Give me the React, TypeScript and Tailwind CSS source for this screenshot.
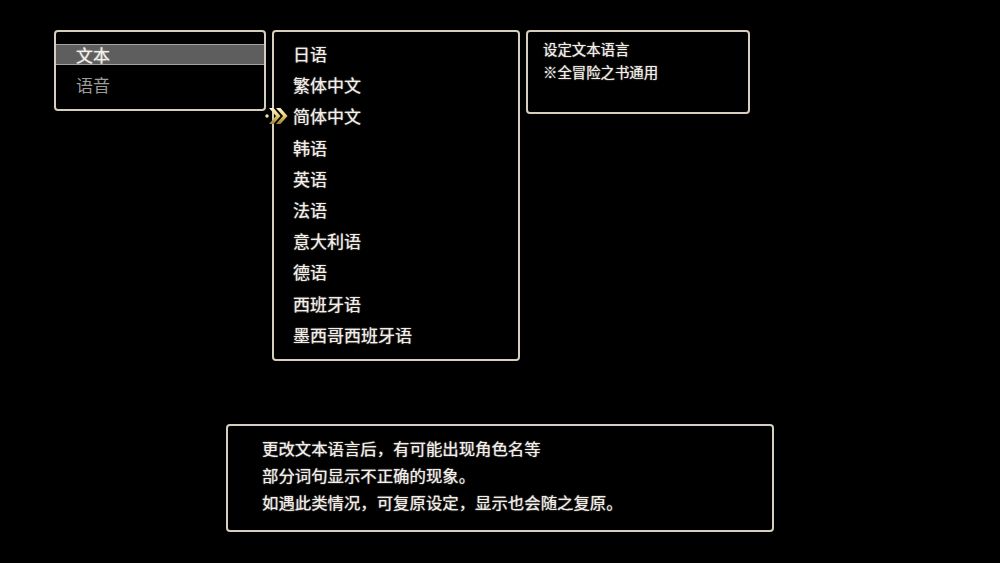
const languages = [
  '日语',
  '繁体中文',
  '简体中文',
  '韩语',
  '英语',
  '法语',
  '意大利语',
  '德语',
  '西班牙语',
  '墨西哥西班牙语',
]

const selected = 2

const font = "font-['Noto_Sans_CJK_SC','Noto_Sans',sans-serif]"
const glow = '[text-shadow:0_0_1px_rgba(255,255,255,0.6),0_0_2px_rgba(255,255,255,0.3)]'

function Cursor() {
  return (
    <svg width="24" height="22" viewBox="0 0 24 22">
      <defs>
        <linearGradient id="gold" x1="0" y1="0" x2="0" y2="1">
          <stop offset="0" stopColor="#fff8d2" />
          <stop offset="0.45" stopColor="#ecd27a" />
          <stop offset="1" stopColor="#9c7f28" />
        </linearGradient>
      </defs>
      <circle cx="2" cy="11" r="1.7" fill="#f4e6a8" />
      <path d="M4 3 L8.5 3 L15.5 11 L8.5 19 L4 19 L11 11 Z" fill="url(#gold)" />
      <path d="M11 3 L15.5 3 L22.5 11 L15.5 19 L11 19 L18 11 Z" fill="url(#gold)" />
    </svg>
  )
}

export default function App() {
  return (
    <div className={`h-[563px] w-[1000px] overflow-hidden bg-black text-[#f4f0e8] ${font} ${glow}`}>
      <div className="ml-[54px] flex items-start gap-[6px] pt-[30px]">
        {/* category */}
        <div className="h-[81px] w-[212px] rounded-[4px] border-2 border-[#d6cfc0] pt-[12px]">
          <div className="flex h-[21px] items-center border-y border-[#a3a3a3] bg-[#5e5e5e] pl-[20px] text-[17px] leading-none">
            文本
          </div>
          <div className="mt-[8px] flex h-[22px] items-center pl-[20px] text-[17px] leading-none text-[#9c9c9c] [text-shadow:none]">
            语音
          </div>
        </div>

        {/* languages */}
        <div className="h-[331px] w-[248px] rounded-[4px] border-2 border-[#d6cfc0] pt-[6px]">
          {languages.map((lang, i) => (
            <div key={lang} className="relative flex h-[31.2px] items-center pl-[19px] text-[17px] leading-none">
              {i === selected && (
                <div className="absolute -left-[9px] top-[4.5px] h-[22px] w-[24px]">
                  <Cursor />
                </div>
              )}
              {lang}
            </div>
          ))}
        </div>

        {/* description */}
        <div className="h-[84px] w-[224px] rounded-[4px] border-2 border-[#d6cfc0] pl-[15px] pt-[5px] text-[14.4px] leading-[23px]">
          <div>设定文本语言</div>
          <div>※全冒险之书通用</div>
        </div>
      </div>

      <div className="ml-[226px] mt-[63px] h-[108px] w-[548px] rounded-[4px] border-2 border-[#d6cfc0] pl-[34px] pt-[9px] text-[16.4px] leading-[27px]">
        <div>更改文本语言后，有可能出现角色名等</div>
        <div>部分词句显示不正确的现象。</div>
        <div>如遇此类情况，可复原设定，显示也会随之复原。</div>
      </div>
    </div>
  )
}
